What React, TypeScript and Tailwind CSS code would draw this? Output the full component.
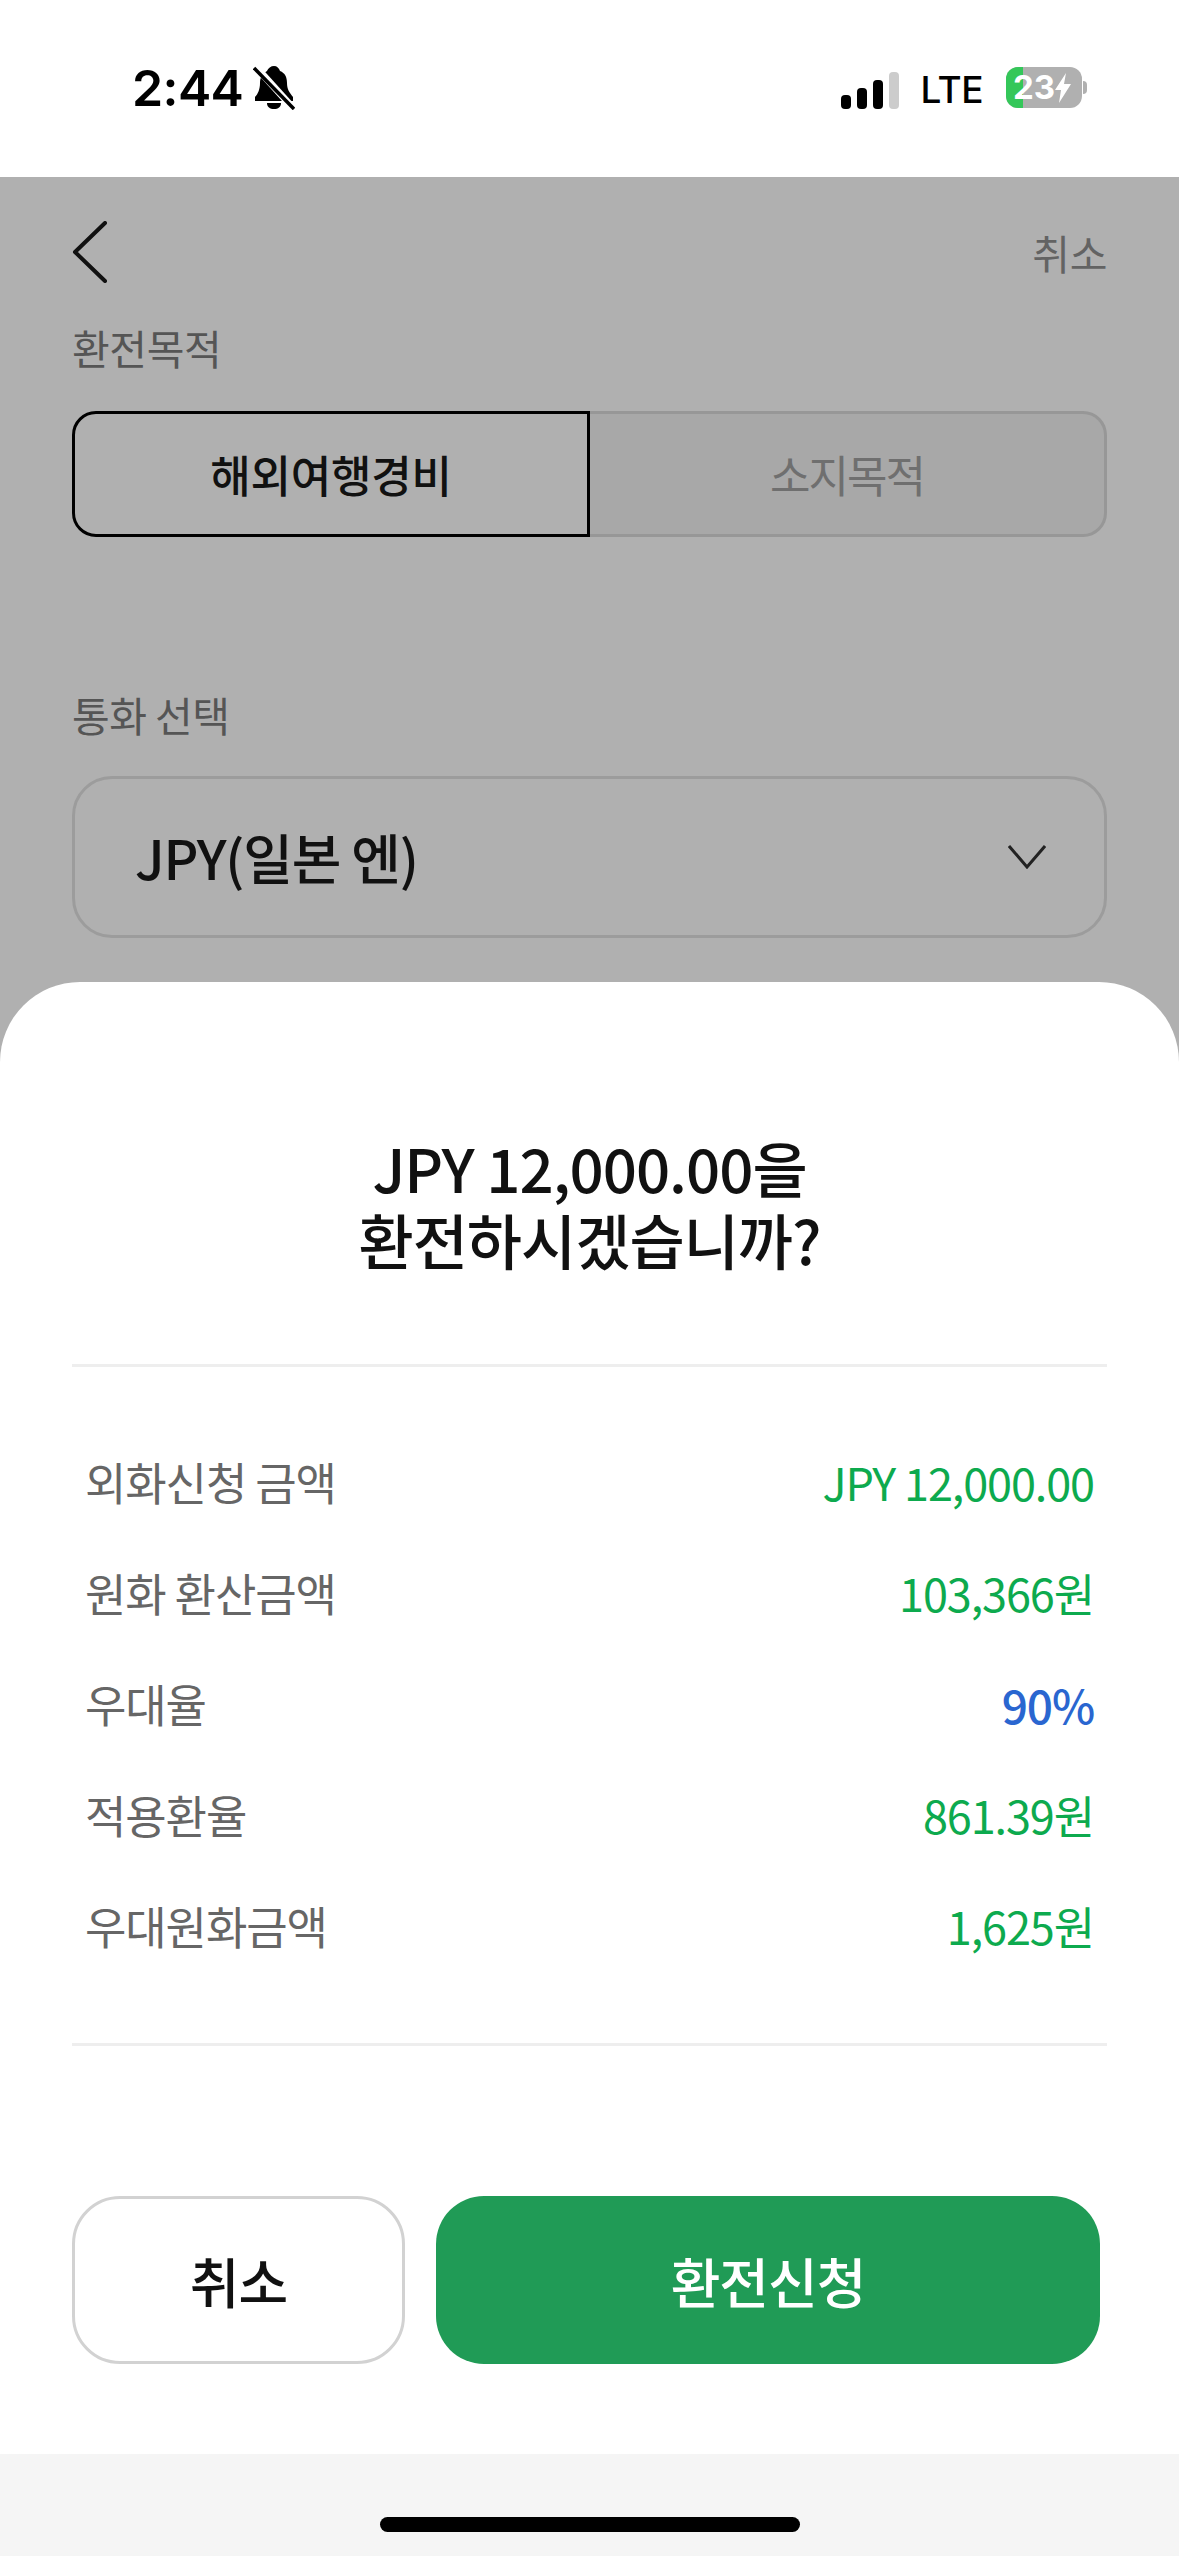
const FONT = "font-['Noto_Sans_CJK_KR','Noto_Sans',sans-serif]"

const rows = [
    { label: '외화신청 금액', value: 'JPY 12,000.00', color: 'text-[#0daa4e]', weight: 'font-normal text-[45px]' },
    { label: '원화 환산금액', value: '103,366원', color: 'text-[#0daa4e]', weight: 'font-normal text-[45px]' },
    { label: '우대율', value: '90%', color: 'text-[#2a66d0]', weight: 'font-medium text-[46px]' },
    { label: '적용환율', value: '861.39원', color: 'text-[#0daa4e]', weight: 'font-normal text-[45px]' },
    { label: '우대원화금액', value: '1,625원', color: 'text-[#0daa4e]', weight: 'font-normal text-[45px]' },
]

function StatusBar() {
    return (
        <div className="flex h-[177px] items-start bg-white pt-[63px] pl-[132px] pr-[92px]">
            <span className="font-['Inter',sans-serif] text-[50px] leading-[50px] font-semibold tracking-[-0.6px] text-black">2:44</span>
            <svg className="mt-[3px] ml-[10px]" width="42" height="44" viewBox="0 0 42 44" fill="none">
                <path d="M21 0c3 0 5 2 6 5 5 2 7 6 7 12 0 6 2 9 6 14v4H2v-4c3-3 5-8 5-14 0-5 2-9 7-12 1-3 4-5 7-5z" fill="#000" />
                <path d="M14 37h14c0 4-3 6-7 6s-7-2-7-6z" fill="#000" />
                <path d="M2 0l38 42" stroke="#fff" strokeWidth="7" />
                <path d="M1 2l40 41" stroke="#000" strokeWidth="3.5" />
            </svg>
            <div className="ml-auto flex items-start">
                <div className="mt-[9px] flex h-[37px] items-end gap-[6px]">
                    <div className="h-[14px] w-[10px] rounded-[4px] bg-black" />
                    <div className="h-[21px] w-[10px] rounded-[4px] bg-black" />
                    <div className="h-[29px] w-[10px] rounded-[4px] bg-black" />
                    <div className="h-[37px] w-[10px] rounded-[4px] bg-[#cccccc]" />
                </div>
                <span className="mt-[8px] ml-[22px] font-['Inter',sans-serif] text-[37px] leading-[38px] font-medium tracking-[-0.5px] text-black">LTE</span>
                <div className="relative mt-[4px] ml-[23px] flex h-[41px] w-[76px] items-center overflow-hidden rounded-[12px] bg-[#b0b0b0]">
                    <div className="h-full w-[17px] bg-[#34c759]" />
                    <div className="absolute inset-0 flex items-center pl-[7px] font-['Inter',sans-serif] text-[33px] leading-[33px] font-bold text-white">
                        23
                        <svg width="17" height="30" viewBox="0 0 17 30"><path d="M11 0L0 17h6L4 30 16 11H9z" fill="#fff" /></svg>
                    </div>
                </div>
                <div className="mt-[18px] ml-[1px] h-[13px] w-[4px] rounded-r-[4px] bg-[#b0b0b0]" />
            </div>
        </div>
    )
}

export default function App() {
    return (
        <div className={`${FONT} relative flex h-[2556px] w-[1179px] flex-col overflow-hidden bg-[#b0b0b0]`}>
            <StatusBar />

            <div className="flex flex-col px-[72px] pt-[29px]">
                <div className="flex h-[92px] items-center justify-between">
                    <svg width="36" height="62" viewBox="0 0 36 62" fill="none">
                        <path d="M33 2L3 31l30 29" stroke="#111111" strokeWidth="4" strokeLinecap="round" strokeLinejoin="round" />
                    </svg>
                    <span className="text-[41px] leading-[60px] tracking-[-0.4px] text-[#636363]">취소</span>
                </div>
                <div className="mt-[19px] h-[60px] text-[41px] leading-[60px] tracking-[-0.4px] text-[#555555]">환전목적</div>
                <div className="mt-[34px] flex h-[126px]">
                    <div className="flex w-[518px] items-center justify-center rounded-l-[24px] border-[3px] border-black text-[44px] leading-[60px] font-medium tracking-[-0.2px] text-[#111111]">해외여행경비</div>
                    <div className="flex flex-1 items-center justify-center rounded-r-[24px] border-y-[3px] border-r-[3px] border-[#979797] bg-[#a8a8a8] text-[44px] leading-[60px] tracking-[-2px] text-[#6f6f6f]">소지목적</div>
                </div>
                <div className="mt-[147px] h-[60px] text-[41px] leading-[60px] tracking-[-0.5px] text-[#555555]">통화 선택</div>
                <div className="mt-[32px] flex h-[162px] items-center justify-between rounded-[40px] border-[3px] border-[#9c9c9c] pr-[58px] pl-[60px]">
                    <span className="text-[54px] leading-[70px] font-medium tracking-[-1.2px] text-[#111111]">JPY(일본 엔)</span>
                    <svg width="38" height="24" viewBox="0 0 38 24" fill="none"><path d="M1 1l18 21L37 1" stroke="#222222" strokeWidth="3" /></svg>
                </div>
            </div>

            <div className="absolute inset-x-0 top-[982px] flex h-[1574px] flex-col rounded-t-[80px] bg-white">
                <div className="px-[72px]">
                    <div className="mt-[149px] text-center text-[60px] leading-[72px] font-medium tracking-[-1px] text-[#111111]">
                        JPY 12,000.00을<br />환전하시겠습니까?
                    </div>
                    <div className="mt-[89px] h-[3px] bg-[#eeeeee]" />
                    <div className="flex flex-col gap-[41px] px-[13px] pt-[80px] pb-[82px]">
                        {rows.map((row) => (
                            <div key={row.label} className="flex h-[70px] items-center justify-between leading-[70px] tracking-[-1.1px]">
                                <span className="text-[45px] text-[#666666]">{row.label}</span>
                                <span className={`${row.color} ${row.weight}`}>{row.value}</span>
                            </div>
                        ))}
                    </div>
                    <div className="h-[3px] bg-[#eeeeee]" />
                    <div className="mt-[150px] flex gap-[31px] pr-[7px]">
                        <button className="h-[168px] w-[333px] rounded-[48px] border-[3px] border-[#d2d2d2] bg-white text-[54px] font-medium tracking-[-1px] text-[#111111]">취소</button>
                        <button className="h-[168px] flex-1 rounded-[48px] bg-[#209b56] text-[54px] font-medium tracking-[-1px] text-white">환전신청</button>
                    </div>
                </div>
                <div className="mt-auto flex h-[102px] items-start justify-center bg-[#f5f5f5] pt-[63px]">
                    <div className="h-[15px] w-[420px] rounded-full bg-black" />
                </div>
            </div>
        </div>
    )
}
